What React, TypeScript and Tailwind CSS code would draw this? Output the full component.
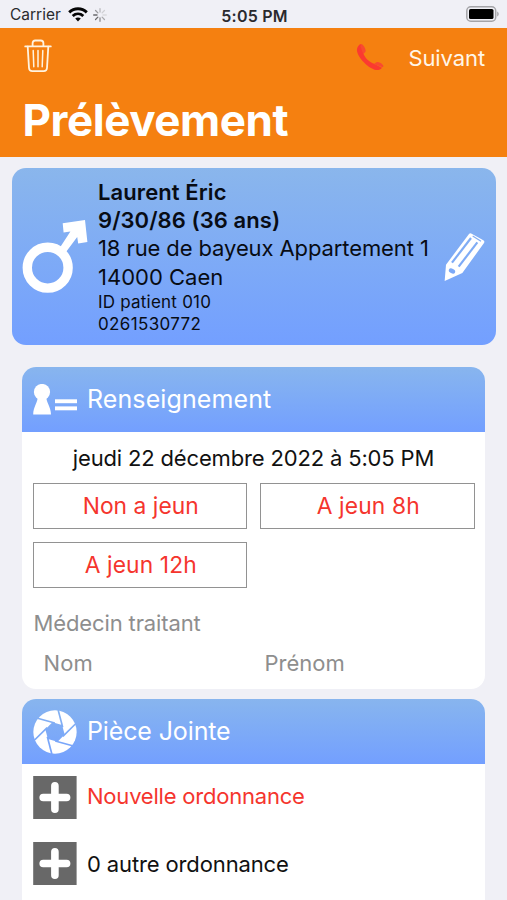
import type { ReactNode } from "react";

const turns = [0, 60, 120, 180, 240, 300];

function WifiIcon() {
  return (
    <svg className="h-[15px] w-5" viewBox="0 0 20 15" fill="none" stroke="#050505" strokeWidth="2.9">
      <path d="M1.2 5.4C6.2 0.6 13.8 0.6 18.8 5.4" />
      <path d="M4.7 9C7.8 6.2 12.2 6.2 15.3 9" />
      <path d="M10 14.6L7.2 11.6C8.8 10.2 11.2 10.2 12.8 11.6Z" fill="#050505" stroke="none" />
    </svg>
  );
}

function Spinner() {
  const shades = ["#b9b9bd", "#cfcfd3", "#d9d9dd", "#a9a9ad", "#8a8a8e", "#6a6a6e", "#68686c", "#98989c"];
  return (
    <svg className="h-[14px] w-[14px]" viewBox="-7 -7 14 14">
      {shades.map((c, i) => (
        <line key={c} x1="0" y1="-3" x2="0" y2="-6.3" stroke={c} strokeWidth="1.3" strokeLinecap="round" transform={`rotate(${i * 45})`} />
      ))}
    </svg>
  );
}

function BatteryIcon() {
  return (
    <svg className="h-4 w-[33px]" viewBox="0 0 33 16">
      <rect x="0.8" y="0.8" width="28.9" height="14.4" rx="4" fill="#f0f0f6" stroke="#a4a4a8" strokeWidth="1.5" />
      <rect x="3" y="3" width="24.5" height="10" rx="1.6" fill="#000" />
      <path d="M31.2 5.6C33.2 6.4 33.2 9.6 31.2 10.4Z" fill="#a4a4a8" />
    </svg>
  );
}

function TrashIcon() {
  return (
    <svg className="h-[34px] w-7" viewBox="0 0 28 34" fill="none" stroke="#fff3df" strokeWidth="1.8" strokeLinecap="round" strokeLinejoin="round">
      <path d="M1.2 7.4H26.8" />
      <path d="M8.6 7.2V4.2C8.6 2.4 9.6 1.5 11.2 1.5H16.8C18.4 1.5 19.4 2.4 19.4 4.2V7.2" />
      <path d="M3.7 7.6L5 29C5.2 31.2 6.3 32.2 8.3 32.2H19.7C21.7 32.2 22.8 31.2 23 29L24.3 7.6" />
      <path d="M9.2 11.6L9.8 27.8M14 11.6V27.8M18.8 11.6L18.2 27.8" strokeWidth="1.5" />
    </svg>
  );
}

function PhoneIcon() {
  return (
    <svg className="h-10 w-[45px]" viewBox="0 0 135 120">
      <path d="M32 24C26 26 20 35 21 45C24 66 56 98 78 102C86 103 93 99 96 95L72 83C58 79 43 64 40 52Z" fill="#fb3a30" />
      <path d="M34 24C40 25 47 38 47 44C47 49 43 50 40 54L31 31Z" fill="#f94a30" />
      <path d="M98 94C101 91 101 89 98 86C94 81 87 78 83 78C77 78 76 83 71 84Z" fill="#f94a30" />
    </svg>
  );
}

function MaleIcon() {
  return (
    <svg className="h-[75px] w-[66px]" viewBox="22 219 66 75">
      <circle cx="47.7" cy="267.7" r="20.4" fill="none" stroke="#fff" strokeWidth="9.4" />
      <path d="M62.7 223.3L85 220L87.4 242L78.2 243.4L77.2 237L66 252L60 247.6L70.4 231.5L63.6 232.4Z" fill="#fff" />
    </svg>
  );
}

function PencilIcon() {
  return (
    <svg className="h-[50px] w-[42px]" viewBox="28 20 126 150">
      <mask id="pencil">
        <path d="M33 167L37 118L106 26Q109 22 114 25L149 45Q154 48 151 53L86 143Z" fill="#fff" />
        <g stroke="#000" strokeLinecap="butt" fill="none">
          <path d="M55 112L112 38" strokeWidth="6.5" />
          <path d="M75 124L131 51" strokeWidth="6.5" />
          <path d="M117 32L142 48" strokeWidth="3.5" />
        </g>
        <ellipse cx="55" cy="137" rx="10" ry="7" transform="rotate(25 55 137)" fill="#000" />
      </mask>
      <rect x="28" y="20" width="126" height="150" fill="#fff" mask="url(#pencil)" />
    </svg>
  );
}

function PersonIcon() {
  return (
    <svg className="h-8 w-11" viewBox="33 384 44 32" fill="#fff">
      <circle cx="42" cy="392" r="8.1" />
      <path d="M37.6 397C38 402 33.2 407 33.2 414.6H51C51 407 46 402 46.4 397Z" />
      <rect x="55" y="399.3" width="22" height="3.9" />
      <rect x="55" y="406.4" width="22" height="3.9" />
    </svg>
  );
}

function ApertureIcon() {
  return (
    <svg className="h-11 w-11" viewBox="-66 -66 132 132">
      <mask id="blades">
        <circle r="65" fill="#fff" />
        <polygon points="21.2,-21.2 29,7.8 7.8,29 -21.2,21.2 -29,-7.8 -7.8,-29" fill="#000" />
        {turns.map((a) => (
          <path key={a} d="M23 -14L9.5 -66" stroke="#000" strokeWidth="5" transform={`rotate(${a})`} />
        ))}
      </mask>
      <rect x="-66" y="-66" width="132" height="132" fill="#fff" mask="url(#blades)" />
    </svg>
  );
}

function PlusTile() {
  return (
    <svg className="h-[43px] w-11 shrink-0" viewBox="0 0 44 43">
      <rect x="0.2" width="43.4" height="43" fill="#686868" />
      <path d="M21.9 9.8V33.2M10.2 21.5H33.6" stroke="#fff" strokeWidth="7.6" strokeLinecap="round" />
    </svg>
  );
}

function SectionHeader({ icon, children }: { icon: ReactNode; children: ReactNode }) {
  return (
    <div className="flex h-[65px] items-center rounded-t-[14px] bg-linear-to-b from-[#88b5ee] to-[#739fff] pl-[10.5px] text-[25px] text-white">
      {icon}
      {children}
    </div>
  );
}

function Choice({ children }: { children: ReactNode }) {
  return (
    <button className="flex h-[46px] items-center justify-center border-[1.5px] border-[#929292] pl-0.5 text-[22.8px] leading-none text-[#f5352d]">
      {children}
    </button>
  );
}

export default function App() {
  return (
    <div className="h-[900px] w-[507px] overflow-hidden bg-[#f0f0f6] font-['Inter','Liberation_Sans',sans-serif] text-[22px] text-[#080c14]">
      <div className="grid h-7 grid-cols-3 items-center pr-2 pl-2.5 text-[15.5px] leading-none text-[#2a2a2e]">
        <div className="flex items-center pt-0.5">
          <span>Carrier</span>
          <span className="-mt-px ml-[7px]"><WifiIcon /></span>
          <span className="ml-[5px]"><Spinner /></span>
        </div>
        <span className="pt-[3px] text-center text-[16px] font-semibold tracking-[0.2px] whitespace-nowrap">5:05 PM</span>
        <span className="flex justify-end"><BatteryIcon /></span>
      </div>

      <header className="h-[129px] bg-[#f58010]">
        <div className="flex h-[60px] items-center pr-[22px] pl-6">
          <div className="-mt-1"><TrashIcon /></div>
          <div className="mr-[13px] ml-auto -mt-1"><PhoneIcon /></div>
          <span className="tracking-[-0.1px] text-[#fff6e8]">Suivant</span>
        </div>
        <h1 className="pl-[22.5px] text-[44px] leading-[64px] font-bold tracking-[-0.45px] text-white">Prélèvement</h1>
      </header>

      <section className="mx-[11.5px] mt-[11px] flex h-[177px] rounded-[14px] bg-linear-to-b from-[#8ab6ec] to-[#739fff] pl-[10.5px]">
        <div className="mt-[51px] w-[76px] shrink-0"><MaleIcon /></div>
        <div className="flex flex-col pt-[10px] whitespace-nowrap">
          <span className="h-7 leading-7 font-semibold tracking-[0.1px]">Laurent Éric</span>
          <span className="h-7 leading-7 font-semibold tracking-[0.07px]">9/30/86 (36 ans)</span>
          <span className="h-7 leading-7 tracking-[-0.1px]">18 rue de bayeux Appartement 1</span>
          <span className="h-[30px] leading-[30px]">14000 Caen</span>
          <span className="h-[21px] text-[17px] leading-[21px] tracking-[0.22px]">ID patient 010</span>
          <span className="h-[22px] text-[17px] leading-[22px] tracking-[0.36px]">0261530772</span>
        </div>
        <div className="mt-[64px] mr-[11px] ml-auto"><PencilIcon /></div>
      </section>

      <main className="mx-[22px] mt-[22px] flex flex-col gap-[10px]">
        <section className="h-[322px] rounded-[14px] bg-white">
          <SectionHeader icon={<PersonIcon />}>
            <span className="ml-[10.5px] pt-px tracking-[0.1px]">Renseignement</span>
          </SectionHeader>
          <p className="h-[51px] text-center leading-[52px] tracking-[-0.16px] text-[#111]">jeudi 22 décembre 2022 à 5:05 PM</p>
          <div className="grid grid-cols-2 gap-x-[13px] gap-y-[13px] px-[10.5px]">
            <Choice><span className="tracking-[0.04px]">Non a jeun</span></Choice>
            <Choice><span className="tracking-[0.14px]">A jeun 8h</span></Choice>
            <Choice><span className="tracking-[0.1px]">A jeun 12h</span></Choice>
          </div>
          <div className="px-[11.5px] text-[#8e8e8e]">
            <p className="mt-[15px] leading-10 tracking-[-0.12px]">Médecin traitant</p>
            <div className="grid grid-cols-[221px_1fr] pl-2.5 leading-10">
              <span className="tracking-[0.1px]">Nom</span>
              <span>Prénom</span>
            </div>
          </div>
        </section>

        <section className="h-[240px] rounded-t-[14px] bg-white">
          <SectionHeader icon={<ApertureIcon />}>
            <span className="ml-[10.5px] pt-px tracking-[-0.13px]">Pièce Jointe</span>
          </SectionHeader>
          <div className="flex flex-col gap-[23px] pt-3 pl-[10.5px] leading-10">
            <div className="flex items-center">
              <PlusTile />
              <span className="-mt-[3px] ml-[10.5px] tracking-[-0.21px] text-[#f5352d]">Nouvelle ordonnance</span>
            </div>
            <div className="flex items-center">
              <PlusTile />
              <span className="ml-[10.5px] tracking-[-0.13px] text-[#111]">0 autre ordonnance</span>
            </div>
          </div>
        </section>
      </main>
    </div>
  );
}
